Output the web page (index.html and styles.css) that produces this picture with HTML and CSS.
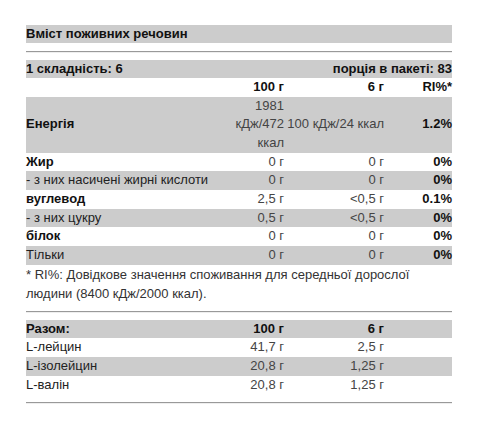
FILE: index.html
```
<!doctype html>
<html lang="uk">

<head>
  <meta charset="UTF-8" />
  <meta name="viewport" content="width=device-width, initial-scale=1.0" />
  <title>Вміст поживних речовин</title>
  <link rel="stylesheet" href="styles.css">
</head>

<body>
  <div class="facts">
    <h2 class="facts-title">Вміст поживних речовин</h2>
    <hr class="rule" />

    <div class="serving">
      <span>1 складність: 6</span>
      <span>порція в пакеті: 83</span>
    </div>

    <table class="nutri">
      <colgroup>
        <col />
        <col class="col-100" />
        <col class="col-6" />
        <col class="col-ri" />
      </colgroup>
      <thead>
        <tr>
          <th></th>
          <th class="num">100 г</th>
          <th class="num">6 г</th>
          <th class="num">RI%*</th>
        </tr>
      </thead>
      <tbody>
        <tr class="alt">
          <td class="label">Енергія</td>
          <td class="num val">1981 кДж/472 ккал</td>
          <td class="num val">100 кДж/24 ккал</td>
          <td class="num pct">1.2%</td>
        </tr>
        <tr>
          <td class="label">Жир</td>
          <td class="num val">0 г</td>
          <td class="num val">0 г</td>
          <td class="num pct">0%</td>
        </tr>
        <tr class="alt">
          <td class="sub">- з них насичені жирні кислоти</td>
          <td class="num val">0 г</td>
          <td class="num val">0 г</td>
          <td class="num pct">0%</td>
        </tr>
        <tr>
          <td class="label">вуглевод</td>
          <td class="num val">2,5 г</td>
          <td class="num val">&lt;0,5 г</td>
          <td class="num pct">0.1%</td>
        </tr>
        <tr class="alt">
          <td class="sub">- з них цукру</td>
          <td class="num val">0,5 г</td>
          <td class="num val">&lt;0,5 г</td>
          <td class="num pct">0%</td>
        </tr>
        <tr>
          <td class="label">білок</td>
          <td class="num val">0 г</td>
          <td class="num val">0 г</td>
          <td class="num pct">0%</td>
        </tr>
        <tr class="alt">
          <td class="sub">Тільки</td>
          <td class="num val">0 г</td>
          <td class="num val">0 г</td>
          <td class="num pct">0%</td>
        </tr>
      </tbody>
    </table>

    <p class="footnote">* RI%: Довідкове значення споживання для середньої дорослої людини (8400 кДж/2000 ккал).</p>
    <hr class="rule" />

    <table class="nutri">
      <colgroup>
        <col />
        <col class="col-100" />
        <col class="col-6" />
        <col class="col-ri" />
      </colgroup>
      <thead>
        <tr class="alt">
          <th class="label">Разом:</th>
          <th class="num">100 г</th>
          <th class="num">6 г</th>
          <th></th>
        </tr>
      </thead>
      <tbody>
        <tr>
          <td class="sub">L-лейцин</td>
          <td class="num val">41,7 г</td>
          <td class="num val">2,5 г</td>
          <td></td>
        </tr>
        <tr class="alt">
          <td class="sub">L-ізолейцин</td>
          <td class="num val">20,8 г</td>
          <td class="num val">1,25 г</td>
          <td></td>
        </tr>
        <tr>
          <td class="sub">L-валін</td>
          <td class="num val">20,8 г</td>
          <td class="num val">1,25 г</td>
          <td></td>
        </tr>
      </tbody>
    </table>
    <hr class="rule" />
  </div>
</body>

</html>
```

FILE: styles.css
```
body {
  margin: 0;
  padding: 25px 25px 0 26px;
  background-color: #FFFFFF;
  color: #111111;
  font-family: "Liberation Sans", Arial, sans-serif;
  font-size: 13px;
}

.facts-title {
  margin: 0;
  background-color: #CCCCCC;
  font-size: 13px;
  font-weight: bold;
  line-height: 18px;
}

.rule {
  margin: 8px 0 7px 0;
  border: 0;
  border-top: 1px solid #999999;
  border-bottom: 1px solid #EEEEEE;
  height: 0;
}

.serving {
  display: flex;
  justify-content: space-between;
  background-color: #CCCCCC;
  font-weight: bold;
  line-height: 18px;
}

.nutri {
  width: 100%;
  border-collapse: collapse;
  border-spacing: 0;
  table-layout: fixed;
}

.col-100 {
  width: 50px;
}

.col-6 {
  width: 100px;
}

.col-ri {
  width: 68px;
}

.nutri th,
.nutri td {
  padding: 0;
  line-height: 18.67px;
  vertical-align: middle;
  text-align: left;
}

.nutri th {
  font-weight: bold;
  color: #111111;
}

.nutri .num {
  text-align: right;
}

.nutri .label {
  font-weight: bold;
}

.nutri .sub {
  color: #222222;
}

.nutri .val {
  color: #444444;
}

.nutri .pct {
  font-weight: bold;
}

.nutri tr.alt {
  background-color: #CCCCCC;
}

.footnote {
  margin: 0;
  line-height: 19px;
  color: #333333;
}
```
